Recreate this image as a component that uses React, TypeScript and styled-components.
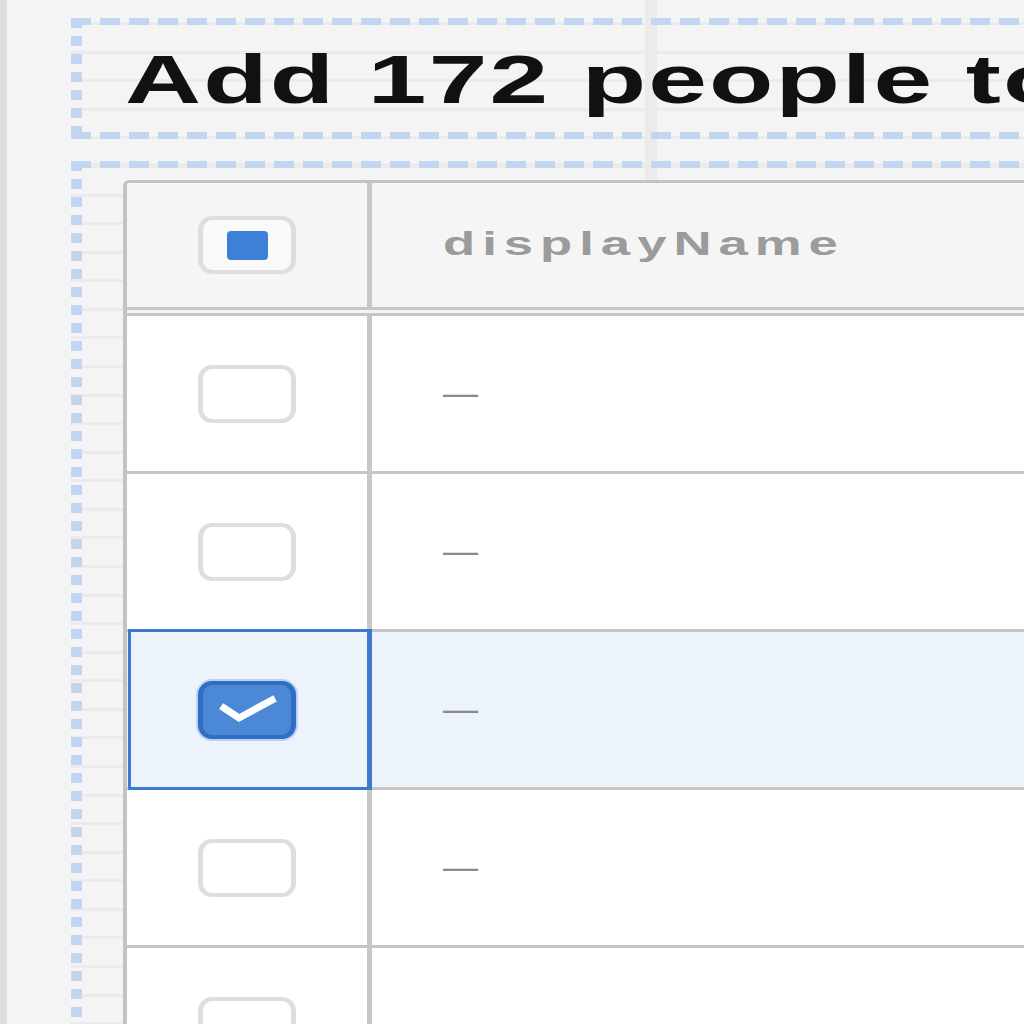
import React from "react";
import styled, { createGlobalStyle, css } from "styled-components";

const GlobalStyle = createGlobalStyle`
  html, body {
    margin: 0;
    padding: 0;
    width: 1024px;
    height: 1024px;
    overflow: hidden;
    background: #f4f4f4;
    font-family: "Liberation Sans", Arial, sans-serif;
  }
  * { box-sizing: border-box; }
`;

const Page = styled.div`
  display: flex;
  width: 1024px;
  height: 1024px;
  overflow: hidden;
  background:
    linear-gradient(90deg, transparent 645px, #ebebeb 645px, #ebebeb 657px, transparent 657px) 0 0 / 100% 180px no-repeat,
    #f4f4f4;
`;

const LeftStrip = styled.div`
  flex: 0 0 7px;
  background: #dedede;
`;

const Main = styled.div`
  flex: 1;
  display: flex;
  flex-direction: column;
  gap: 22px;
  padding: 18px 0 0 64px;
  min-width: 0;
`;

const dashColor = "#c2d6f1";
const guideLines = css`
  repeating-linear-gradient(180deg, #ebebeb 0, #ebebeb 3px, transparent 3px, transparent 28.57px) 0 4px / 100% 100%
`;

const HeaderBox = styled.header`
  flex: 0 0 121px;
  width: 1200px;
  height: 121px;
  display: flex;
  align-items: center;
  padding: 0 0 0 54px;
  background:
    repeating-linear-gradient(90deg, ${dashColor} 0, ${dashColor} 20px, transparent 20px, transparent 29px) left top / 100% 7px no-repeat,
    repeating-linear-gradient(90deg, ${dashColor} 0, ${dashColor} 20px, transparent 20px, transparent 29px) left bottom / 100% 7px no-repeat,
    repeating-linear-gradient(180deg, ${dashColor} 0, ${dashColor} 10px, transparent 10px, transparent 18px) left top / 11px 100% no-repeat,
    ${guideLines};
`;

const Title = styled.h1`
  margin: 0;
  display: inline-block;
  font-family: "Liberation Sans", Arial, sans-serif;
  font-weight: 700;
  font-size: 68px;
  line-height: 68px;
  letter-spacing: 1.4px;
  color: #111111;
  white-space: nowrap;
  transform: scaleX(1.55);
  transform-origin: left center;
`;

const TableBox = styled.section`
  width: 1200px;
  flex: 1 0 auto;
  padding: 19px 0 0 52px;
  background:
    repeating-linear-gradient(90deg, ${dashColor} 0, ${dashColor} 20px, transparent 20px, transparent 29px) left top / 100% 7px no-repeat,
    repeating-linear-gradient(180deg, ${dashColor} 0, ${dashColor} 10px, transparent 10px, transparent 18px) left top / 11px 100% no-repeat,
    ${guideLines};
`;

const Table = styled.div`
  width: 1200px;
  background: #ffffff;
  border-top: 3px solid #c3c3c3;
  border-left: 4px solid #c3c3c3;
  border-top-left-radius: 6px;
  overflow: hidden;
`;

const HeaderRow = styled.div`
  display: grid;
  grid-template-columns: 245px 1fr;
  height: 133px;
  background: #f5f5f5;
  border-bottom: 9px double #c6c6c6;
`;

const Row = styled.div<{ $selected?: boolean }>`
  display: grid;
  grid-template-columns: 245px 1fr;
  height: 158px;
  background: ${(p) => (p.$selected ? "#edf3fb" : "#ffffff")};
  border-bottom: 3px solid #c6c6c6;
`;

const CheckCell = styled.div<{ $selected?: boolean }>`
  position: relative;
  display: flex;
  align-items: center;
  justify-content: center;
  border-right: 5px solid #c8c8c8;
  ${(p) =>
    p.$selected &&
    css`
      &::after {
        content: "";
        position: absolute;
        top: -3px;
        bottom: -3px;
        left: 1px;
        right: -5px;
        border: 3px solid #3a7bcf;
        border-right-width: 5px;
        pointer-events: none;
      }
    `}
`;

const LabelCell = styled.div`
  display: flex;
  align-items: center;
  padding-left: 71px;
`;

const HeaderLabel = styled.span`
  display: inline-block;
  font-family: "Liberation Sans", Arial, sans-serif;
  font-weight: 700;
  font-size: 34px;
  line-height: 34px;
  letter-spacing: 4.5px;
  color: #9b9b9b;
  transform: scaleX(1.55);
  transform-origin: left center;
  margin-top: -4px;
`;

const EmptyValue = styled.span`
  font-family: "Liberation Sans", Arial, sans-serif;
  font-size: 35px;
  line-height: 35px;
  color: #8a8a8a;
  margin-top: -2px;
`;

type BoxState = "unchecked" | "checked" | "indeterminate";

const Box = styled.span<{ $state: BoxState }>`
  display: flex;
  align-items: center;
  justify-content: center;
  width: 98px;
  height: 58px;
  border-radius: 14px;
  border-style: solid;
  border-width: 4px 5px;
  ${(p) =>
    p.$state === "checked"
      ? css`
          background: #4b88d6;
          border-color: #2f6ec4;
          box-shadow: 0 0 0 2px rgba(74, 134, 212, 0.3);
        `
      : css`
          background: ${p.$state === "indeterminate" ? "#f9f9f9" : "#ffffff"};
          border-color: #dedede;
        `}
`;

const Dash = styled.span`
  width: 41px;
  height: 29px;
  border-radius: 4px;
  background: #3d80d8;
`;

const Checkbox: React.FC<{ state: BoxState }> = ({ state }) => (
  <Box $state={state}>
    {state === "indeterminate" && <Dash />}
    {state === "checked" && (
      <svg width="88" height="50" viewBox="0 0 88 50" preserveAspectRatio="none">
        <polyline
          points="21,23 36,33 69,15"
          fill="none"
          stroke="#ffffff"
          strokeWidth="7"
          strokeLinecap="square"
          strokeLinejoin="miter"
        />
      </svg>
    )}
  </Box>
);

const rows = [false, false, true, false, false];

export default function App() {
  return (
    <>
      <GlobalStyle />
      <Page>
        <LeftStrip />
        <Main>
          <HeaderBox>
            <Title>Add 172 people to group</Title>
          </HeaderBox>
          <TableBox>
            <Table>
              <HeaderRow>
                <CheckCell>
                  <Checkbox state="indeterminate" />
                </CheckCell>
                <LabelCell>
                  <HeaderLabel>displayName</HeaderLabel>
                </LabelCell>
              </HeaderRow>
              {rows.map((selected, i) => (
                <Row key={i} $selected={selected}>
                  <CheckCell $selected={selected}>
                    <Checkbox state={selected ? "checked" : "unchecked"} />
                  </CheckCell>
                  <LabelCell>
                    <EmptyValue>{i < 4 ? "—" : ""}</EmptyValue>
                  </LabelCell>
                </Row>
              ))}
            </Table>
          </TableBox>
        </Main>
      </Page>
    </>
  );
}
